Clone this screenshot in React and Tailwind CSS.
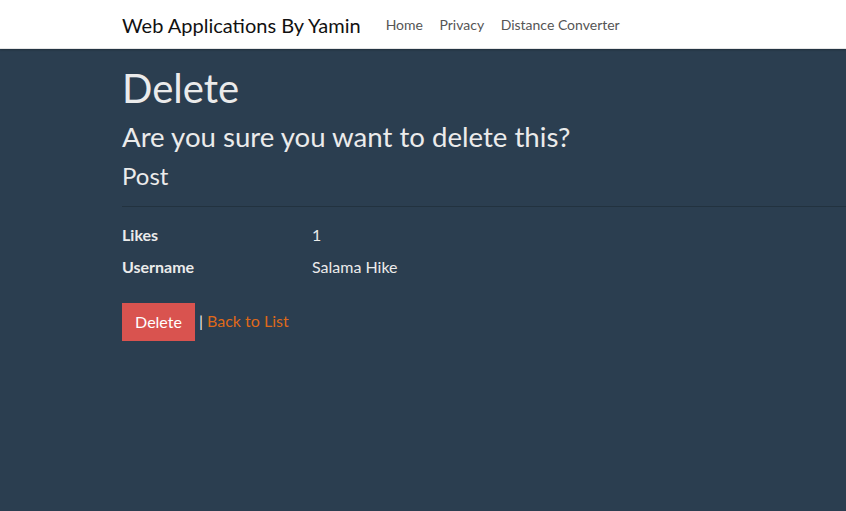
import React from 'react';

const NavLink = ({ children }) => (
    <a href="#" className="px-2 text-[14px] text-[#555]">
        {children}
    </a>
);

const App = () => {
    return (
        <div className="min-h-[511px] bg-[#2b3e50] font-['Lato','Open_Sans',sans-serif] text-[#ebebeb]">
            <nav className="h-[49px] bg-white border-b border-[#e5e5e5] shadow-[0_1px_2px_rgba(0,0,0,0.25)] flex items-center pl-[122px] pt-[1px]">
                <a href="#" className="text-[20px] text-[#111] mr-[17px] leading-none">
                    Web Applications By Yamin
                </a>
                <div className="flex gap-[0.5px]">
                    <NavLink>Home</NavLink>
                    <NavLink>Privacy</NavLink>
                    <NavLink>Distance Converter</NavLink>
                </div>
            </nav>

            <main className="pl-[122px] pt-[15px]">
                <h1 className="text-[40px] leading-[1.2] mb-2">Delete</h1>
                <h3 className="text-[27.6px] leading-[1.2] mb-2 h-[33.6px]">Are you sure you want to delete this?</h3>
                <div>
                    <h4 className="text-[24px] leading-[1.2]">Post</h4>
                    <hr className="my-4 border-t border-[#22323f]" />
                    <dl className="text-[16px] leading-[1.5] mb-6">
                        <div className="flex mb-2">
                            <dt className="w-[190px] font-bold">Likes</dt>
                            <dd>1</dd>
                        </div>
                        <div className="flex mb-2">
                            <dt className="w-[190px] font-bold">Username</dt>
                            <dd>Salama Hike</dd>
                        </div>
                    </dl>
                    <form className="flex items-center text-[16px]">
                        <button
                            type="button"
                            className="h-[38px] w-[73px] bg-[#d9534f] text-white"
                        >
                            Delete
                        </button>
                        <span className="ml-[4px] -mt-[3px]">|</span>
                        <a href="#" className="ml-[4px] -mt-[3px] text-[#df691a]">Back to List</a>
                    </form>
                </div>
            </main>
        </div>
    );
};

export default App;
